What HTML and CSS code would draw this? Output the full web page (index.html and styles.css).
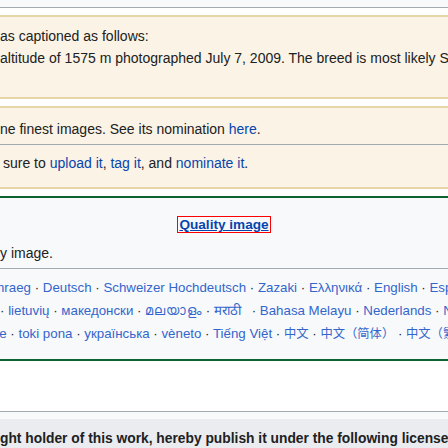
FILE: index.html
```html
<!DOCTYPE html>
<html lang="en">
<head>
<meta charset="utf-8">
<title>Assessment</title>
<link rel="stylesheet" href="styles.css">
</head>
<body>
<div class="topbar"></div>
<div class="potd">
  <div class="line">as captioned as follows:</div>
  <div class="line">altitude of 1575 m photographed July 7, 2009. The breed is most likely Swiss Brown Cattle.</div>
</div>
<div class="fp">
  <div class="fp-top"><span class="line">ne finest images. See its nomination <a href="#">here</a>.</span></div>
  <div class="fp-bottom"><span class="line">sure to <a href="#">upload it</a>, <a href="#">tag it</a>, and <a href="#">nominate it</a>.</span></div>
</div>
<div class="strip"></div>
<div class="qi">
  <div class="qi-title"><a href="#" class="qi-link">Quality image</a></div>
  <div class="qi-text">y image.</div>
  <div class="langs">
    <div class="lang-line l1"><a href="#">Cymraeg</a> · <a href="#">Deutsch</a> · <a href="#">Schweizer Hochdeutsch</a> · <a href="#">Zazaki</a> · <a href="#">Ελληνικά</a> · <a href="#">English</a> · <a href="#">Esperanto</a> · <a href="#">español</a></div>
    <div class="lang-line l2">· <a href="#">lietuvių</a> · <a href="#">македонски</a> · <a href="#" class="ml">മലയാളം</a> · <a href="#" class="mr">मराठी</a> · <a href="#">Bahasa Melayu</a> · <a href="#">Nederlands</a> · <a href="#">Norsk</a></div>
    <div class="lang-line l3"><a href="#">Türkçe</a> · <a href="#">toki pona</a> · <a href="#">українська</a> · <a href="#">vèneto</a> · <a href="#">Tiếng Việt</a> · <a href="#" class="cjk">中文</a> · <a href="#" class="cjk">中文（简体）</a> · <a href="#" class="cjk">中文（繁體）</a></div>
  </div>
</div>
<div class="blank"></div>
<div class="lic-gap"></div>
<div class="license"><span class="lic-text">ght holder of this work, hereby publish it under the following license:</span></div>
</body>
</html>
```
FILE: styles.css
```css
html, body {
  margin: 0;
  padding: 0;
  background: #ffffff;
  font-family: "Liberation Sans", Arial, "Noto Sans CJK SC", sans-serif;
  color: #202122;
  overflow: hidden;
}
a {
  color: #0645ad;
  text-decoration: none;
}
.topbar {
  height: 7px;
  background: #f8f9fa;
  border-bottom: 1px solid #a2a9b1;
  margin-bottom: 7px;
}
.potd {
  background: #faf3e6;
  border-top: 2px solid #e6d5a6;
  border-bottom: 2px solid #e6d5a6;
  padding: 8px 0 28px 0;
  font-size: 14px;
  line-height: 22px;
  white-space: nowrap;
  overflow: hidden;
  margin-bottom: 7px;
}
.line {
  display: block;
  white-space: nowrap;
}
.fp {
  background: #faf3e6;
  border-top: 2px solid #e6d5a6;
  border-bottom: 2px solid #e6d5a6;
  font-size: 14px;
  line-height: 22px;
  white-space: nowrap;
  overflow: hidden;
}
.fp-top {
  padding: 10px 0 4px 0;
  border-bottom: 1px solid #a2a9b1;
}
.fp-bottom {
  padding: 7px 0 13px 3px;
}
.strip {
  height: 7px;
  background: #ffffff;
  border-bottom: 2px solid #0b6331;
}
.qi {
  background: #f8f9fa;
  border-bottom: 2px solid #0b6331;
  padding-top: 18px;
  overflow: hidden;
}
.qi-title {
  text-align: center;
  line-height: 15px;
  height: 17px;
}
.qi-link {
  display: inline-block;
  border: 1px solid #ff0000;
  font-weight: bold;
  font-size: 13.6px;
  text-decoration: underline;
  color: #0645ad;
  padding: 0 1px;
}
.qi-text {
  margin-top: 9px;
  font-size: 14px;
  line-height: 22px;
  padding-bottom: 4px;
  border-bottom: 1px solid #a2a9b1;
}
.langs {
  padding: 7px 0 13px 0;
  font-size: 13.3px;
  line-height: 23px;
}
.lang-line {
  white-space: nowrap;
}
.lang-line a {
  color: #3366cc;
}
.ml {
  display: inline-block;
  min-width: 49px;
  letter-spacing: 1px;
}
.mr {
  display: inline-block;
  min-width: 34px;
}
.cjk {
  font-size: 12.3px;
}
.l1 {
  margin-left: -23px;
}
.l2 {
  margin-left: 0;
}
.l3 {
  margin-left: -34px;
}
.blank {
  height: 50px;
  background: #ffffff;
  border-bottom: 1px solid #a2a9b1;
}
.lic-gap {
  height: 7px;
  background: #f8f9fa;
}
.license {
  background: #eaecf0;
  height: 40px;
  font-weight: bold;
  font-size: 13.8px;
  line-height: 40px;
  white-space: nowrap;
  color: #202122;
}
```
